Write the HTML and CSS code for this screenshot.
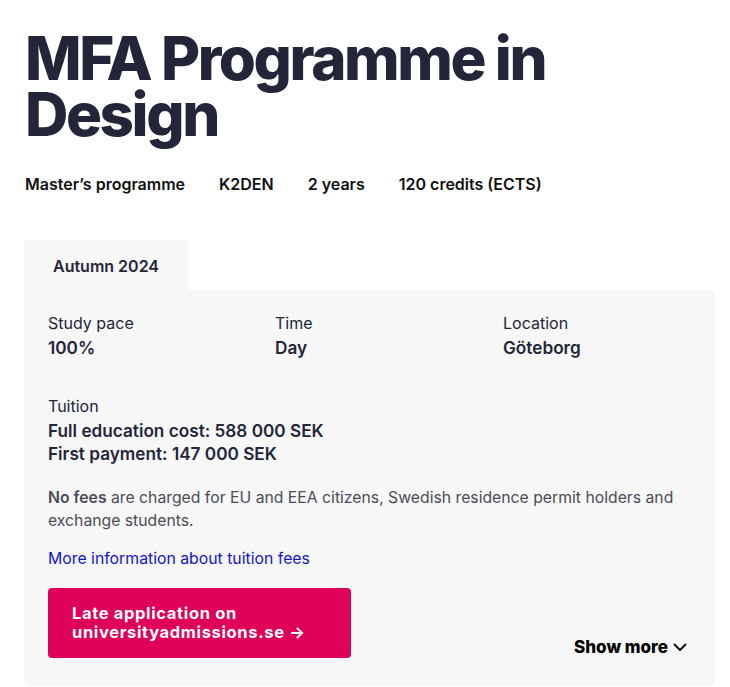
FILE: index.html
```html
<!DOCTYPE html>
<html>
  <head>
    <link rel="stylesheet" href="styles.css">
  </head>
  <body>
    <main class="programme">
      <h1 class="title">MFA Programme in Design</h1>

      <ul class="facts">
        <li>Master’s programme</li>
        <li>K2DEN</li>
        <li>2 years</li>
        <li>120 credits (ECTS)</li>
      </ul>

      <div class="tabs">
        <div class="tab active">Autumn 2024</div>
      </div>

      <section class="panel">
        <div class="info-grid">
          <div class="info">
            <span class="label">Study pace</span>
            <strong class="value">100%</strong>
          </div>
          <div class="info">
            <span class="label">Time</span>
            <strong class="value">Day</strong>
          </div>
          <div class="info">
            <span class="label">Location</span>
            <strong class="value">Göteborg</strong>
          </div>
        </div>

        <div class="tuition">
          <span class="label">Tuition</span>
          <strong class="value">Full education cost: 588 000 SEK</strong>
          <strong class="value">First payment: 147 000 SEK</strong>
        </div>

        <p class="fees-note"><b>No fees</b> are charged for EU and EEA citizens, Swedish residence permit holders and exchange students.</p>

        <a class="fees-link" href="#">More information about tuition fees</a>

        <div class="panel-footer">
          <a class="apply-btn" href="#">Late application on<br>universityadmissions.se →</a>
          <button class="show-more">
            Show more
            <svg width="14" height="14" viewBox="0 0 14 14" aria-hidden="true">
              <path d="M1.5 4.5 L7 10 L12.5 4.5" fill="none" stroke="currentColor" stroke-width="1.8" stroke-linecap="round" stroke-linejoin="round"/>
            </svg>
          </button>
        </div>
      </section>
    </main>
  </body>
</html>
```

FILE: styles.css
```css
body {
  margin: 0;
  background: #fff;
  font-family: Inter, "Noto Sans", sans-serif;
  color: #232639;
}

.programme {
  padding: 30px 15px 0 24px;
}

.title {
  margin: 0 0 31px 1px;
  font-size: 60px;
  line-height: 56px;
  font-weight: 800;
  letter-spacing: -2.4px;
  width: 560px;
}

.facts {
  display: flex;
  gap: 34px;
  list-style: none;
  margin: 0 0 45px 1px;
  padding: 0;
  font-size: 16px;
  line-height: 22px;
  font-weight: 600;
  color: #111;
}

.tabs {
  display: flex;
}

.tab {
  background: #f7f7f7;
  border-radius: 4px 4px 0 0;
  padding: 0 29px;
  height: 50px;
  line-height: 53px;
  font-size: 16px;
  font-weight: 600;
}

.panel {
  background: #f7f7f7;
  border-radius: 0 4px 4px 4px;
  padding: 22px 24px 28px;
}

.info-grid {
  display: grid;
  grid-template-columns: 227px 228px 1fr;
}

.info,
.tuition {
  display: flex;
  flex-direction: column;
  font-size: 16px;
  line-height: 23.5px;
}

.label {
  font-weight: 400;
}

.value {
  font-size: 17.2px;
  font-weight: 600;
}

.tuition {
  margin-top: 36px;
}

.fees-note {
  margin: 20px 0 0;
  font-size: 15.75px;
  line-height: 23px;
  color: #4b4c58;
  max-width: 640px;
}

.fees-note b {
  font-weight: 600;
}

.fees-link {
  display: block;
  margin-top: 15px;
  font-size: 15.8px;
  line-height: 23px;
  color: #1414c8;
  text-decoration: none;
}

.panel-footer {
  display: flex;
  justify-content: space-between;
  align-items: flex-end;
  margin-top: 18px;
}

.apply-btn {
  display: block;
  width: 255px;
  padding: 16px 24px;
  background: #df0059;
  border-radius: 4px;
  color: #fff;
  font-size: 16.5px;
  line-height: 19px;
  font-weight: 700;
  letter-spacing: 0.65px;
  text-decoration: none;
}

.show-more {
  display: flex;
  align-items: center;
  gap: 5px;
  margin: 0 4px 0 0;
  padding: 0;
  border: none;
  background: none;
  font-family: inherit;
  font-size: 17px;
  line-height: 22px;
  font-weight: 800;
  color: #000;
}
```
